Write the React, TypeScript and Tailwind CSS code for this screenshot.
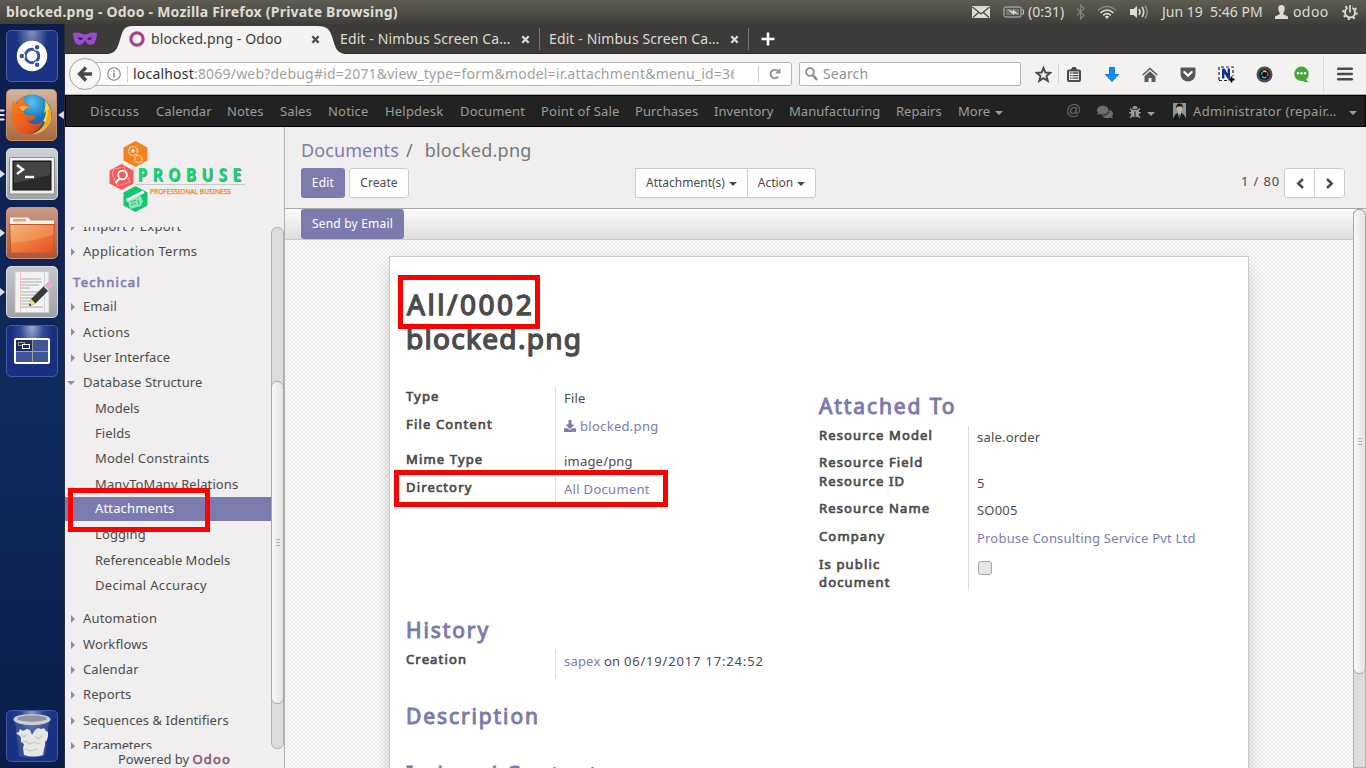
import type { ReactNode } from "react";
import { FaComments, FaBug, FaDownload } from "react-icons/fa";

const ODOO = "font-['Noto_Sans','Liberation_Sans',sans-serif]";

function Caret({ className = "" }: { className?: string }) {
  return (
    <svg width="8" height="4" viewBox="0 0 8 4" className={className}>
      <path d="M0 0h8L4 4z" fill="currentColor" />
    </svg>
  );
}

function Cross({ color }: { color: string }) {
  return (
    <svg width="9" height="9" viewBox="0 0 9 9">
      <path d="M1.3 1.3l6.4 6.4M7.7 1.3L1.3 7.7" stroke={color} strokeWidth="2.3" />
    </svg>
  );
}

/* ---------- Desktop panel ---------- */

function TopPanel() {
  return (
    <header className="flex h-6 shrink-0 items-center bg-linear-to-b from-[#5f5d52] to-[#3f3e39] text-[#dfdbd2]">
      <div className="w-[971px] pl-1.5 text-[14px] leading-6 font-bold tracking-[0.22px] whitespace-nowrap">
        blocked.png - Odoo - Mozilla Firefox (Private Browsing)
      </div>
      <svg width="20" height="14" viewBox="0 0 20 14">
        <rect x="1" y="1" width="18" height="12" fill="#dfdbd2" />
        <path d="M1.500 2l8.500 7L18.500 2M2 12.500l5.500-5M18 12.500l-5.500-5" fill="none" stroke="#4b4a44" strokeWidth="1.300" />
      </svg>
      <svg width="21" height="12" viewBox="0 0 21 12" className="ml-3">
        <rect x="1" y="1" width="17" height="10" rx="1.500" fill="none" stroke="#c9c5bc" />
        <path d="M19 4h1.500v4H19" fill="none" stroke="#c9c5bc" />
        <rect x="3" y="3" width="13" height="6" fill="#77756d" />
        <path d="M4 3l6 2.500V3.500L16 9l-5-2v2z" fill="#dfdbd2" />
      </svg>
      <span className="ml-[4px] w-[48px] text-[14px] leading-6">(0:31)</span>
      <svg width="9" height="16" viewBox="0 0 9 16">
        <path d="M1 4.500l7 7L4.500 15V1L8 4.500l-7 7" fill="none" stroke="#85837b" strokeWidth="1.200" />
      </svg>
      <svg width="20" height="14" viewBox="0 0 20 14" className="ml-[12px]">
        <path d="M1 5.500Q10-2.500 19 5.500" fill="none" stroke="#8b8980" strokeWidth="1.600" />
        <path d="M3.500 8Q10 2 16.500 8M6.200 10.400Q10 7 13.800 10.400" fill="none" stroke="#dfdbd2" strokeWidth="1.600" />
        <path d="M7.800 11.600Q10 9.800 12.200 11.600L10 14z" fill="#dfdbd2" />
      </svg>
      <svg width="20" height="16" viewBox="0 0 20 16" className="ml-[13px]">
        <path d="M0 5h3.500L7 2v12l-3.500-3H0z" fill="#dfdbd2" />
        <path d="M9 5q2 3 0 6M12 3q3.500 5 0 10" fill="none" stroke="#dfdbd2" strokeWidth="1.600" />
        <path d="M15 1.500q4.500 6.500 0 13" fill="none" stroke="#96948b" strokeWidth="1.400" />
      </svg>
      <span className="ml-[12px] w-[113px] text-[14px] leading-6 whitespace-pre">Jun 19  5:46 PM</span>
      <svg width="13" height="14" viewBox="0 0 13 14">
        <path d="M6.500 0C9 0 10 1.800 9.700 4.200 9.500 6 8.600 7 8.300 8v1.300L13 11.500V14H0v-2.500l4.700-2.200V8C4.400 7 3.500 6 3.300 4.200 3 1.800 4 0 6.500 0z" fill="#dfdbd2" />
      </svg>
      <span className="ml-[5px] w-[49px] text-[14px] leading-6 tracking-[0.4px]">odoo</span>
      <svg width="16" height="16" viewBox="0 0 16 16">
        <circle cx="8" cy="8.500" r="5" fill="none" stroke="#dfdbd2" strokeWidth="1.900" />
        <circle cx="8" cy="8.500" r="6.700" fill="none" stroke="#dfdbd2" strokeWidth="2" strokeDasharray="2.200 3.060" />
        <path d="M8 0v9" stroke="#4a4943" strokeWidth="4.500" />
        <path d="M8 1v7.500" stroke="#dfdbd2" strokeWidth="1.800" />
      </svg>
    </header>
  );
}

/* ---------- Launcher ---------- */

function Tile({ bg, arrow, children }: { bg: string; arrow?: boolean; children: ReactNode }) {
  return (
    <div className="flex items-center">
      <span className="w-1.5">
        {arrow && (
          <svg width="5" height="8" viewBox="0 0 5 8">
            <path d="M0 0l5 4-5 4z" fill="#dcdce4" />
          </svg>
        )}
      </span>
      <div className={`flex size-[52px] items-center justify-center rounded-[5px] border ${bg}`}>{children}</div>
    </div>
  );
}

function Launcher() {
  return (
    <aside className="flex w-[65px] shrink-0 flex-col gap-[7px] border-r border-[#2a2c3c] bg-linear-to-b from-[#0c1d4a] via-[#102a5e] to-[#0b1c49] pt-1.5 pb-1.5">
      <Tile bg="border-[#4a62a8] bg-[radial-gradient(ellipse_at_50%_0,#8592c0,#1b3482_45%,#1a3282)]">
        <svg width="32" height="32" viewBox="0 0 32 32">
          <circle cx="16" cy="16" r="15.200" fill="#fff" />
          <circle cx="16" cy="16" r="6.800" fill="none" stroke="#3a559d" strokeWidth="3" />
          <g fill="#3a559d" stroke="#fff" strokeWidth="1.200">
            <circle cx="5.800" cy="16" r="2.900" />
            <circle cx="21.100" cy="7.200" r="2.900" />
            <circle cx="21.100" cy="24.800" r="2.900" />
          </g>
        </svg>
      </Tile>
      <div className="flex items-center">
        <svg width="6" height="14" viewBox="0 0 6 14">
          <path d="M0 1.500h4l1 1-1 1H0zM0 6h4l1 1-1 1H0zM0 10.500h4l1 1-1 1H0z" fill="#e6e6ee" />
        </svg>
        <div className="flex size-[52px] items-center justify-center rounded-[5px] border border-[#cf8e68] bg-linear-to-b from-[#d5b49d] to-[#a8683e]">
          <svg width="46" height="46" viewBox="0 0 46 46">
            <defs>
              <radialGradient id="globe" cx=".5" cy=".2" r=".8">
                <stop offset="0" stopColor="#5cc4ef" />
                <stop offset=".5" stopColor="#1a7cc0" />
                <stop offset="1" stopColor="#123c80" />
              </radialGradient>
              <linearGradient id="fox" x1="0" y1="0" x2="1" y2="1">
                <stop offset="0" stopColor="#f58a22" />
                <stop offset=".6" stopColor="#ea5a1c" />
                <stop offset="1" stopColor="#c93a16" />
              </linearGradient>
            </defs>
            <circle cx="23" cy="22" r="19.500" fill="url(#globe)" />
            <path d="M36 8c5 6 8 14 5 22-4 8-10 12-18 12 6-2 11-6 13-12-1 0-1-1-2-1 2-3 3-7 3-10l-2 2c1-5 2-9 1-13z" fill="#ffd83a" />
            <path d="M41 15c2 8 1 15-5 21-3 3-7 5-11 6 9-5 14-13 14-24z" fill="#f7a51f" />
            <path d="M4 8c1 1.500 2 3 3.500 4C9 8 12 5 15 4c-.5 3 0 5 1 7 3 1 5 2 4 4-1 1.500-4 2-5 3.500-.3 3 1 4.500 4 5 3 .500 6-.8 8 1-1 3-5 5-9 4 4 5 11 4 16 1-2 6-8 12.500-15 12.500C11 42 3 36 2 26 1.500 20 3 13 4 8z" fill="url(#fox)" />
            <path d="M10 15q5-3 9 0-3 2-5 4z" fill="#fbb15c" />
          </svg>
        </div>
        <svg width="6" height="8" viewBox="0 0 6 8" className="ml-px">
          <path d="M6 0v8L0 4z" fill="#dcdce4" />
        </svg>
      </div>
      <Tile arrow bg="border-[#dcdcdf] bg-linear-to-b from-[#d0d1d5] to-[#a3a4a9]">
        <svg width="46" height="38" viewBox="0 0 46 38" className="mt-1">
          <rect x=".5" y=".5" width="45" height="36.500" rx="1" fill="#efefef" stroke="#8c8c8c" />
          <rect x="4" y="4" width="38" height="29" fill="#2b2b2b" stroke="#111" />
          <path d="M5 5h36v13L5 26z" fill="#444" />
          <path d="M8 8l6 4.500L8 17" fill="none" stroke="#fff" strokeWidth="2.400" />
          <path d="M16 20h9" stroke="#fff" strokeWidth="2.400" />
        </svg>
      </Tile>
      <Tile arrow bg="border-[#d19277] bg-linear-to-b from-[#c99a88] to-[#a9573a]">
        <svg width="46" height="38" viewBox="0 0 46 38" className="mt-1">
          <defs>
            <linearGradient id="folder" x1="0" y1="0" x2="1" y2="1">
              <stop offset="0" stopColor="#f0b070" />
              <stop offset=".5" stopColor="#f07a3c" />
              <stop offset="1" stopColor="#e6501f" />
            </linearGradient>
          </defs>
          <path d="M1 12V1.500h18l3 3h23V12z" fill="#f3f1ee" />
          <path d="M4 3h13v2.500H4z" fill="#f3a06b" />
          <path d="M.500 8.500h45L44 37H2z" fill="url(#folder)" stroke="#c9552c" />
          <path d="M1.500 9.500h43v9Q24 26 2 27z" fill="#f7c08a" opacity=".3" />
        </svg>
      </Tile>
      <Tile arrow bg="border-[#d8d8db] bg-linear-to-b from-[#c6c6ca] to-[#a1a1a6]">
        <svg width="46" height="44" viewBox="0 0 46 44">
          <rect x="6" y="1.500" width="34" height="41" fill="#f2f2f0" stroke="#c8c8c6" />
          <path d="M11.500 2v40" stroke="#f3b6b6" strokeWidth=".8" />
          <path d="M35.500 2v40" stroke="#b8cdf0" strokeWidth=".8" />
          <path d="M12 9h20M12 12h21M12 15h18M12 18h9M12 22h20M12 25h16M12 28h19M12 31h15M12 34h10M12 37h22" stroke="#a5a5a5" strokeWidth=".9" />
          <path d="M20 36l2-7 14-14 4.500 4.500-14 14z" fill="#3a3a3a" />
          <path d="M20 36l2-7 4.500 4.500z" fill="#f2e27a" />
          <path d="M20 36l.8-2.500 1.700 1.700z" fill="#222" />
          <path d="M36 15l3-3q2-.8 3.500.8T43 16l-2.500 3.500z" fill="#eba6d2" />
          <path d="M34.500 16.500l1.500-1.500 4.500 4.500-1.500 1.500z" fill="#d5d5d5" />
        </svg>
      </Tile>
      <Tile bg="border-[#3f58a5] bg-[radial-gradient(ellipse_at_50%_0,#a3afd2,#2f4a97_32%,#17317f_60%)]">
        <svg width="36" height="26" viewBox="0 0 36 26">
          <rect x="1" y="1" width="34" height="24" rx="1" fill="#41569a" stroke="#fff" strokeWidth="2" />
          <path d="M2 2h16v11H2z" fill="#1d2b5e" />
          <path d="M18.500 2v22M2 13.500h32" stroke="#a5a08f" />
          <rect x="4.500" y="4.500" width="6" height="3" fill="none" stroke="#9a9a94" />
          <rect x="8.500" y="6.500" width="7" height="4" fill="#1d2b5e" stroke="#fff" />
        </svg>
      </Tile>
      <div className="grow" />
      <Tile bg="border-[#405aa6] bg-[radial-gradient(ellipse_at_50%_0,#8a98c6,#24408f_35%,#183383_60%)]">
        <svg width="40" height="46" viewBox="0 0 40 46">
          <path d="M3 8l4 35q13 3 26 0l4-35z" fill="#7d8cb5" opacity=".3" />
          <path d="M4 20l3-1 1-3 3 2 4-2 3 1 2 5 3-5 3-2 3 1 3-1 2 3 2 1v4l-1 4-2 2 0 4-1 3-1 6q-10 3-19 0l-1-7 1-4-3-2 0-4-1-2z" fill="#e6e6e4" />
          <path d="M9 22l3 2 3-3M23 23l3 3 4-3M10 29l4-1 3 3 5-2 6 2M13 36l5 2 8-2" fill="none" stroke="#c6c6c4" strokeWidth="1.100" />
          <ellipse cx="20" cy="6.500" rx="18.500" ry="5.500" fill="#d2d2cc" />
          <ellipse cx="20" cy="5.500" rx="15" ry="3.200" fill="#8f93a0" />
        </svg>
      </Tile>
    </aside>
  );
}

/* ---------- Firefox chrome ---------- */

function TabStrip() {
  return (
    <div className="flex h-[30px] shrink-0 items-center bg-[linear-gradient(#3c3b37_29px,#2c2b28_29px)] text-[14px] text-[#dfdbd2]">
      <svg width="24" height="14" viewBox="0 0 24 14" className="ml-2 shrink-0">
        <path d="M0 1q5-1.500 9 .8 3 1.500 6 0Q19-.5 24 1q-.2 7-3 10.500-5 3.500-8-1.500l-1-1.500-1 1.500q-3 5-8 1.500Q.2 8 0 1z" fill="#9a4bd0" />
        <path d="M4.500 6q3.500-2 5.500 1-3 2.500-5.500-1zM19.500 6q-3.500-2-5.500 1 3 2.500 5.500-1z" fill="#3c2b48" />
      </svg>
      <div className="relative ml-[9px] h-[30px] w-[242px] shrink-0">
        <svg width="242" height="30" viewBox="0 0 242 30" className="absolute inset-0">
          <path d="M2 30C11 29 12 22 14.500 14C17 6 18 2 27 2H211C222 2 224 6 226.500 14C229 22 230 29 239 30z" fill="#f4f3f1" />
        </svg>
        <div className="relative flex h-[30px] items-center text-[#3c3c3c]">
          <svg width="16" height="16" viewBox="0 0 16 16" className="ml-[23px] shrink-0">
            <circle cx="8" cy="8" r="6.100" fill="none" stroke="#a24689" strokeWidth="3.200" />
          </svg>
          <span className="ml-1.5 w-[160px] text-[14px] leading-8 tracking-[0.1px]">blocked.png - Odoo</span>
          <Cross color="#4c4c4c" />
        </div>
      </div>
      <span className="-ml-2 w-[181px] shrink-0 text-[14px] leading-8 tracking-[0.12px] whitespace-nowrap">Edit - Nimbus Screen Ca…</span>
      <Cross color="#dedad2" />
      <span className="mx-[9px] h-[22px] w-px bg-[#77756e]" />
      <span className="w-[181px] shrink-0 text-[14px] leading-8 tracking-[0.12px] whitespace-nowrap">Edit - Nimbus Screen Ca…</span>
      <Cross color="#dedad2" />
      <span className="ml-[9px] h-[22px] w-px bg-[#77756e]" />
      <svg width="14" height="14" viewBox="0 0 14 14" className="ml-[12px]">
        <path d="M7 .5v13M.5 7h13" stroke="#fff" strokeWidth="2.600" />
      </svg>
    </div>
  );
}

function NavToolbar() {
  return (
    <div className="flex h-[41px] shrink-0 items-center border-b border-[#b4b1ab] bg-[#f3f2f0] pl-1">
      <div className="z-10 flex size-8 shrink-0 items-center justify-center rounded-full border border-[#a6a39d] bg-[#f8f7f6]">
        <svg width="16" height="16" viewBox="0 0 16 16">
          <path d="M15 8H4M9 1.500L2.500 8 9 14.500" fill="none" stroke="#484844" strokeWidth="3.300" />
        </svg>
      </div>
      <div className="-ml-2 flex h-6 w-[699px] shrink-0 items-center rounded-r-[3px] border border-[#b7b4ae] bg-white pl-[13px]">
        <svg width="14" height="14" viewBox="0 0 14 14">
          <circle cx="7" cy="7" r="6.300" fill="none" stroke="#808080" strokeWidth="1.100" />
          <path d="M7 5.800v4.700M7 3.200v1.600" stroke="#808080" strokeWidth="1.500" />
        </svg>
        <span className="ml-1.5 h-4 w-px bg-[#d0d0d0]" />
        <div className="ml-[5px] w-[601px] overflow-hidden text-[14px] leading-[22px] tracking-[0.2px] whitespace-nowrap text-[#a0a0a0]">
          <span className="text-[#2e2e2e]">localhost</span>:8069/web?debug#id=2071&amp;view_type=form&amp;model=ir.attachment&amp;menu_id=36
        </div>
        <span className="ml-6 h-4 w-px bg-[#d0d0d0]" />
        <svg width="12" height="12" viewBox="0 0 12 12" className="ml-[10px]">
          <path d="M9.200 8.700A4.300 4.300 0 1 1 9 3" fill="none" stroke="#8798a8" strokeWidth="2" />
          <path d="M11.500 0v5.500H6z" fill="#8798a8" />
        </svg>
      </div>
      <div className="ml-[7px] flex h-6 w-[222px] shrink-0 items-center rounded-[2px] border border-[#b7b4ae] bg-white pl-[5px]">
        <svg width="13" height="14" viewBox="0 0 13 14">
          <circle cx="5" cy="5" r="3.900" fill="none" stroke="#8c8c8c" strokeWidth="1.800" />
          <path d="M7.800 8l4.200 5" stroke="#8c8c8c" strokeWidth="2.400" />
        </svg>
        <span className="ml-[5px] text-[14px] leading-[22px] tracking-[0.15px] text-[#8f8f8f]">Search</span>
      </div>
      <svg width="17" height="17" viewBox="0 0 17 17" className="ml-[14px] shrink-0">
        <path d="M8.500 1.800l1.900 4.700 5 .3-3.900 3.200 1.300 4.900-4.300-2.800-4.300 2.800 1.300-4.900L1.600 6.800l5-.3z" fill="#f3f2f0" stroke="#4c4c4c" strokeWidth="1.900" />
      </svg>
      <span className="ml-[6px] h-[18px] w-px bg-[#d2d0cc]" />
      <svg width="14" height="15" viewBox="0 0 14 15" className="ml-2 shrink-0">
        <rect x="1" y="3.500" width="12" height="10.500" rx="1" fill="none" stroke="#4c4c4c" strokeWidth="2" />
        <path d="M3.500 3L5.500 0h3l2 3z" fill="#4c4c4c" />
        <path d="M3 6h1.500M5.500 6h6M3 8.600h1.500M5.500 8.600h6M3 11.200h1.500M5.500 11.200h6" stroke="#4c4c4c" strokeWidth="1.300" />
      </svg>
      <svg width="14" height="15" viewBox="0 0 14 15" className="ml-6">
        <path d="M4.500.5h5v7h4L7 14.500.5 7.500h4z" fill="#0b8bfb" stroke="#0a7ce0" />
      </svg>
      <svg width="16" height="15" viewBox="0 0 16 15" className="ml-[23px]">
        <path d="M.800 8L8 1.500 15.200 8" fill="none" stroke="#5a5a5a" strokeWidth="1.600" />
        <path d="M8 4.200l5.500 5V15H9.500v-4h-3v4h-4V9.200z" fill="#5a5a5a" />
      </svg>
      <svg width="16" height="15" viewBox="0 0 16 15" className="ml-[22px]">
        <path d="M1.500 .500h13q1 0 1 1V7a7.500 7.500 0 0 1-15 0V1.500q0-1 1-1z" fill="#585858" />
        <path d="M4.300 5L8 8.700 11.700 5" fill="none" stroke="#fff" strokeWidth="2.100" strokeLinecap="round" />
      </svg>
      <svg width="17" height="17" viewBox="0 0 17 17" className="ml-[22px]">
        <path d="M1 14V1h14v9M1 14.500h10" fill="none" stroke="#222" strokeWidth="1.200" strokeDasharray="3 2" />
        <path d="M4 12.500v-10h2.600l3 5v-5H12v10H9.500l-3.100-5v5z" fill="#0a3390" />
        <path d="M13.500 10.500v6M10.500 13.500h6" stroke="#000" strokeWidth="1.800" />
      </svg>
      <svg width="17" height="17" viewBox="0 0 17 17" className="ml-[21px]">
        <circle cx="8.500" cy="8.500" r="8" fill="#4b4b57" />
        <circle cx="8.500" cy="8.500" r="5.300" fill="#101016" />
        <path d="M5.500 9a3.200 3.200 0 0 1 1-3" fill="none" stroke="#28c24a" strokeWidth="1.500" />
        <path d="M7 5.500a3.200 3.200 0 0 1 3.500.3" fill="none" stroke="#f0d020" strokeWidth="1.600" />
        <path d="M11 6.200a3.200 3.200 0 0 1 .3 4" fill="none" stroke="#e0308a" strokeWidth="1.500" />
        <path d="M10.500 11.200a3.200 3.200 0 0 1-4.500-1" fill="none" stroke="#20b4e0" strokeWidth="1.500" />
      </svg>
      <svg width="16" height="17" viewBox="0 0 16 17" className="ml-[21px]">
        <path d="M11 12l3.500 4.500q-4 0-7-2z" fill="#4aa63c" />
        <circle cx="7.500" cy="7.800" r="7.300" fill="#4aa63c" />
        <g fill="#fff">
          <circle cx="4" cy="7.300" r="1.200" />
          <circle cx="7.500" cy="7.300" r="1.200" />
          <circle cx="11" cy="7.300" r="1.200" />
        </g>
      </svg>
      <span className="ml-[13px] h-9 w-px bg-[#dcdad6]" />
      <svg width="16" height="14" viewBox="0 0 16 14" className="ml-[13px]">
        <path d="M1.200 1.800h13.600M1.200 7h13.600M1.200 12.200h13.600" stroke="#4c4c4c" strokeWidth="2.500" strokeLinecap="round" />
      </svg>
    </div>
  );
}

/* ---------- Odoo ---------- */

const apps = [
  { label: "Discuss", cls: "w-[66px] tracking-[0.55px]" },
  { label: "Calendar", cls: "w-[71px] tracking-[0.1px]" },
  { label: "Notes", cls: "w-[53px] tracking-[0.1px]" },
  { label: "Sales", cls: "w-[48px] tracking-[0.1px]" },
  { label: "Notice", cls: "w-[57px]" },
  { label: "Helpdesk", cls: "w-[75px]" },
  { label: "Document", cls: "w-[81px] tracking-[0.15px]" },
  { label: "Point of Sale", cls: "w-[94px] tracking-[0.2px]" },
  { label: "Purchases", cls: "w-[79px] tracking-[0.1px]" },
  { label: "Inventory", cls: "w-[75px] tracking-[0.05px]" },
  { label: "Manufacturing", cls: "w-[107px] tracking-[0.05px]" },
  { label: "Repairs", cls: "w-[62px] tracking-[0px]" },
  { label: "More", cls: "w-[37px] tracking-[0px]" },
];

function AppBar() {
  return (
    <nav className="flex h-8 shrink-0 items-center border border-black bg-[#222] pt-px pl-6 text-[13px] tracking-[0.2px] whitespace-nowrap text-[#9d9d9d]">
      {apps.map((a) => (
        <span key={a.label} className={`shrink-0 ${a.cls}`}>{a.label}</span>
      ))}
      <Caret className="mt-0.5" />
      <span className="ml-[63px] w-[31px] pb-0.5 font-['Liberation_Sans',sans-serif] text-[15px] text-[#6d6d6d]">@</span>
      <FaComments className="size-4 text-[#6d6d6d]" />
      <FaBug className="ml-4 size-3" />
      <Caret className="mt-1 ml-1.5" />
      <svg width="13" height="17" viewBox="0 0 13 17" className="ml-[18px]">
        <rect width="13" height="15" fill="#7f9a9c" />
        <path d="M0 17q1-7 6.500-7.500Q12 10 13 17z" fill="#1a1a20" />
        <ellipse cx="6.500" cy="5.500" rx="2.800" ry="3.700" fill="#d9ab93" />
        <path d="M3 5.500Q3 .5 6.500.5T10 5.500L9 3.500H4.500z" fill="#1c1513" />
        <path d="M5 9.500h3L7 14h-1z" fill="#eee" />
        <path d="M6 10.500h1v5H6z" fill="#c8322c" />
      </svg>
      <span className="ml-[7px] w-[156px] tracking-[0.33px]">Administrator (repair…</span>
      <Caret className="mt-0.5" />
    </nav>
  );
}

function Logo() {
  return (
    <svg width="136" height="74" viewBox="0 0 136 74" className={ODOO}>
      <path d="M26.500 1l12 6.500v13l-12 6.500-12-6.500v-13z" fill="#f08421" />
      <g fill="none" stroke="#fbd3ab">
        <circle cx="24" cy="11" r="4.500" strokeWidth="1.600" strokeDasharray="1.800 1" />
        <circle cx="24" cy="11" r="1.500" fill="#fff" />
        <circle cx="29.500" cy="19" r="3.500" strokeWidth="1.600" strokeDasharray="1.500 .8" />
      </g>
      <path d="M12.500 24l12 6.500v13l-12 6.500-12-6.500v-13z" fill="#f25b58" />
      <path d="M5 29l10-2 6 15-12 4-6-12z" fill="none" stroke="#f9a6a2" />
      <circle cx="13.500" cy="35" r="4.300" fill="none" stroke="#fff" strokeWidth="1.800" />
      <path d="M10.500 38.500l-4 4.500" stroke="#fff" strokeWidth="2.200" />
      <path d="M26.500 46l12 6.500v13l-12 6.500-12-6.500v-13z" fill="#10c96f" />
      <path d="M17 59l17-8.500 1.500 2.500L18 62z" fill="#fff" />
      <path d="M19 61l12-6 3 6-2 5-11 3z" fill="#8ce8b8" />
      <path d="M22 62l5-2M22 65l5-2M29 60l1 5" stroke="#10c96f" />
      <g transform="scale(.85 1)" fontSize="18.500" fontWeight="700">
        <text x="34.500" y="42" textLength="122" fill="#7d8f8a">PROBUSE</text>
        <text x="33.500" y="41" textLength="122" fill="#12d877">PROBUSE</text>
      </g>
      <path d="M27 44.500h109" stroke="#c8c8c8" />
      <text x="41" y="54" fontSize="7.500" textLength="81" lengthAdjust="spacingAndGlyphs" fill="#f08421" stroke="#f08421" strokeWidth=".25">PROFESSIONAL BUSINESS</text>
    </svg>
  );
}

type Item = { label: string; kind: "closed" | "open" | "leaf"; active?: boolean; cls?: string };

const topItems: Item[] = [
  { label: "Import / Export", kind: "closed", cls: "tracking-[0.3px]" },
  { label: "Application Terms", kind: "closed", cls: "tracking-[0.3px]" },
];
const technical: Item[] = [
  { label: "Email", kind: "closed" },
  { label: "Actions", kind: "closed", cls: "tracking-[0.35px]" },
  { label: "User Interface", kind: "closed", cls: "tracking-[0px]" },
  { label: "Database Structure", kind: "open" },
  { label: "Models", kind: "leaf", cls: "tracking-[0px]" },
  { label: "Fields", kind: "leaf" },
  { label: "Model Constraints", kind: "leaf", cls: "tracking-[0.18px]" },
  { label: "ManyToMany Relations", kind: "leaf" },
  { label: "Attachments", kind: "leaf", active: true, cls: "tracking-[0.15px]" },
  { label: "Logging", kind: "leaf" },
  { label: "Referenceable Models", kind: "leaf", cls: "tracking-[0px]" },
  { label: "Decimal Accuracy", kind: "leaf", cls: "tracking-[0.33px]" },
];
const rest: Item[] = [
  { label: "Automation", kind: "closed", cls: "tracking-[0.18px]" },
  { label: "Workflows", kind: "closed" },
  { label: "Calendar", kind: "closed" },
  { label: "Reports", kind: "closed" },
  { label: "Sequences & Identifiers", kind: "closed", cls: "tracking-[0.05px]" },
  { label: "Parameters", kind: "closed", cls: "tracking-[-0.2px]" },
];

function MenuRow({ item }: { item: Item }) {
  const pad = item.kind === "leaf" ? "pl-[30px]" : item.kind === "open" ? "pl-[2px]" : "pl-1.5";
  return (
    <li className={`flex h-[25.33px] items-center ${pad} ${item.active ? "border-b border-transparent bg-[#7c7bad] bg-clip-padding text-white" : ""}`}>
      {item.kind === "closed" && (
        <svg width="4" height="8" viewBox="0 0 4 8" className="mr-2">
          <path d="M0 0l4 4-4 4z" fill="#8f8f8f" />
        </svg>
      )}
      {item.kind === "open" && (
        <svg width="8" height="4" viewBox="0 0 8 4" className="mr-2">
          <path d="M0 0h8L4 4z" fill="#8f8f8f" />
        </svg>
      )}
      <span className={item.cls}>{item.label}</span>
    </li>
  );
}

function Sidebar() {
  return (
    <div className="flex w-[220px] shrink-0 flex-col border-r border-[#afafb6] bg-[#f0eeee]">
      <div className="h-[100px] shrink-0 pt-[13px] pl-[44px]">
        <Logo />
      </div>
      <div className="flex h-[522px] shrink-0">
        <div className="w-[206px] overflow-hidden text-[13px] tracking-[0.1px] whitespace-nowrap text-[#4c4c4c]">
          <ul className="-mt-[13px]">
            {topItems.map((i) => <MenuRow key={i.label} item={i} />)}
          </ul>
          <h4 className="h-[29.700px] pt-[7px] pl-2 leading-5 tracking-[1.320px] text-[#7c7bad] [-webkit-text-stroke:0.6px]">Technical</h4>
          <ul>{technical.map((i) => <MenuRow key={i.label} item={i} />)}</ul>
          <ul className="mt-[8.300px]">{rest.map((i) => <MenuRow key={i.label} item={i} />)}</ul>
        </div>
        <div className="flex w-[13px] flex-col rounded-[6px] border border-[#b5b2ae] bg-[#dedcda] pt-[153px]">
          <div className="-mx-px flex h-[323px] flex-col items-center justify-center gap-0.5 rounded-[6px] border border-[#aaa7a3] bg-linear-to-r from-[#f8f8f7] to-[#e4e3e1]">
            <span className="h-px w-1 bg-[#b5b2ae]" />
            <span className="h-px w-1 bg-[#b5b2ae]" />
            <span className="h-px w-1 bg-[#b5b2ae]" />
          </div>
        </div>
      </div>
      <div className="pl-[53px] text-[13px] leading-5 text-[#4c4c4c]">
        Powered by <span className="tracking-[1.100px] text-[#875a7b] [-webkit-text-stroke:0.6px]">Odoo</span>
      </div>
    </div>
  );
}

function ControlPanel() {
  return (
    <div className="h-[82px] shrink-0 border-b border-[#a8a8a8] bg-[#f0eeee] px-4 pt-[9px]">
      <div className="h-[32px] text-[18px] leading-7 whitespace-pre text-[#777]">
        <span className="tracking-[0.1px] text-[#7c7bad]">Documents</span>
        <span className="mr-[12px] ml-[7px]">/</span>
        <span className="tracking-[0.26px]">blocked.png</span>
      </div>
      <div className="flex h-[30px] items-center text-[12px] text-[#4c4c4c]">
        <button className="h-[30px] w-11 rounded-[3px] bg-[#7c7bad] tracking-[0.2px] text-white">Edit</button>
        <button className="ml-1 h-[30px] w-[60px] rounded-[3px] border border-[#ccc] bg-white tracking-[0.1px]">Create</button>
        <button className="ml-[226px] flex h-[30px] w-[113px] items-center justify-center gap-1 border border-[#ccc] bg-white">
          Attachment(s) <Caret className="mt-0.5" />
        </button>
        <button className="-ml-px flex h-[30px] w-[69px] items-center justify-center gap-1 rounded-r-[3px] border border-[#ccc] bg-white">
          Action <Caret className="mt-0.5" />
        </button>
        <span className="ml-[425px] w-[43px] pb-0.5 text-[13px] tracking-[0.85px] whitespace-nowrap">1 / 80</span>
        <button className="flex h-[30px] w-[31px] items-center justify-center rounded-l-[3px] border border-[#ccc] bg-white">
          <svg width="8" height="11" viewBox="0 0 8 11">
            <path d="M7 1L2.300 5.500 7 10" fill="none" stroke="#4c4c4c" strokeWidth="2.600" />
          </svg>
        </button>
        <button className="-ml-px flex h-[30px] w-[31px] items-center justify-center rounded-r-[3px] border border-[#ccc] bg-white">
          <svg width="8" height="11" viewBox="0 0 8 11">
            <path d="M1 1l4.700 4.500L1 10" fill="none" stroke="#4c4c4c" strokeWidth="2.600" />
          </svg>
        </button>
      </div>
    </div>
  );
}

function Field({ label, h, children }: { label: string; h: string; children?: ReactNode }) {
  return (
    <div className={`flex ${h}`}>
      <div className="w-[149px] shrink-0 pr-6 leading-[18px] tracking-[1.150px] text-[#4c4c4c] [-webkit-text-stroke:0.7px]">{label}</div>
      <div className="grow border-l border-[#ddd] pt-[2px] pl-2 leading-[18px] tracking-[0.2px] whitespace-nowrap">{children}</div>
    </div>
  );
}

function Heading({ children }: { children: ReactNode }) {
  return <h2 className="text-[21px] leading-7 tracking-[1.900px] text-[#7c7bad] [-webkit-text-stroke:1px]">{children}</h2>;
}

function Sheet() {
  return (
    <div className="relative mt-4 ml-[104px] h-[560px] w-[860px] border border-[#c8c8d3] bg-white pt-[30px] pl-4 text-[13px] text-[#4c4c4c] shadow-[0_5px_20px_-8px_rgba(0,0,0,0.4)]">
      <h1 className="h-[100px] text-[28px] leading-[34px] [-webkit-text-stroke:1.4px]">
        <div className="pl-px tracking-[2.550px]">All/0002</div>
        <div className="tracking-[1.300px]">blocked.png</div>
      </h1>
      <div className="flex h-[225px]">
        <div className="w-[413px]">
          <Field label="Type" h="h-[28px]">File</Field>
          <Field label="File Content" h="h-[35px]">
            <span className="flex items-center tracking-[0.3px] text-[#7c7bad]">
              <FaDownload className="mr-1 size-3" />blocked.png
            </span>
          </Field>
          <Field label="Mime Type" h="h-[28px]">image/png</Field>
          <Field label="Directory" h="h-[26px]"><span className="tracking-[0.3px] text-[#7c7bad]">All Document</span></Field>
        </div>
        <div className="w-[400px] pt-[5px]">
          <Heading>Attached To</Heading>
          <div className="pt-[6px]">
            <Field label="Resource Model" h="h-[27px]">sale.order</Field>
            <Field label="Resource Field" h="h-[19px]" />
            <Field label="Resource ID" h="h-[27px]">5</Field>
            <Field label="Resource Name" h="h-[28px]">SO005</Field>
            <Field label="Company" h="h-[28px]"><span className="text-[#7c7bad]">Probuse Consulting Service Pvt Ltd</span></Field>
            <Field label="Is public document" h="h-[36px]">
              <span className="mt-[4px] ml-px block size-[14px] rounded-[3px] border border-[#a9a6a2] bg-[#e9e7e5]" />
            </Field>
          </div>
        </div>
      </div>
      <div className="h-[86px] pt-[4px]">
        <Heading>History</Heading>
        <div className="pt-[6px]">
          <Field label="Creation" h="h-[28px]">
            <span className="text-[#7c7bad]">sapex</span> on <span className="tracking-[0.820px]">06/19/2017 17:24:52</span>
          </Field>
        </div>
      </div>
      <div className="h-[58px] pt-[4px]"><Heading>Description</Heading></div>
      <div className="pt-[4px]"><Heading>Indexed Content</Heading></div>
      <div className="absolute top-[18px] left-[8px] h-[54px] w-[142px] border-[5px] border-[#fe0000]" />
      <div className="absolute top-[213px] left-[4px] h-[37px] w-[274px] border-[5px] border-[#fe0000]" />
    </div>
  );
}

function FormView() {
  return (
    <div className="flex min-h-0 grow">
      <div className="w-[1068px] overflow-hidden bg-[conic-gradient(#ebebeb_25%,#fbfbfb_0_50%,#ebebeb_0_75%,#fbfbfb_0)] bg-[length:4px_4px]">
        <div className="h-[31px] border-b border-[#cacaca] bg-linear-to-b from-[#fcfcfc] to-[#dedede] pl-4">
          <button className="h-[30px] w-[103px] rounded-[3px] bg-[#7c7bad] text-[12px] tracking-[0.2px] text-white">Send by Email</button>
        </div>
        <Sheet />
      </div>
      <div className="w-[13px] rounded-t-[6px] bg-[#dedcda] shadow-[inset_0_0_0_1px_#b5b2ae]">
        <div className="flex h-[465px] flex-col items-center justify-center gap-0.5 rounded-[6px] border border-[#aaa7a3] bg-linear-to-r from-[#f8f8f7] to-[#e4e3e1]">
          <span className="h-px w-1 bg-[#b5b2ae]" />
          <span className="h-px w-1 bg-[#b5b2ae]" />
          <span className="h-px w-1 bg-[#b5b2ae]" />
        </div>
      </div>
    </div>
  );
}

export default function App() {
  return (
    <div className={`relative flex h-[768px] w-[1366px] flex-col overflow-hidden ${ODOO}`}>
      <TopPanel />
      <div className="flex min-h-0 grow">
        <Launcher />
        <div className="flex w-[1301px] flex-col">
          <TabStrip />
          <NavToolbar />
          <AppBar />
          <div className="flex min-h-0 grow overflow-hidden">
            <Sidebar />
            <main className="flex w-[1081px] flex-col">
              <ControlPanel />
              <FormView />
            </main>
          </div>
        </div>
      </div>
      <div className="absolute top-[488px] left-[68px] h-[44px] w-[142px] border-[5px] border-[#fe0000]" />
    </div>
  );
}
